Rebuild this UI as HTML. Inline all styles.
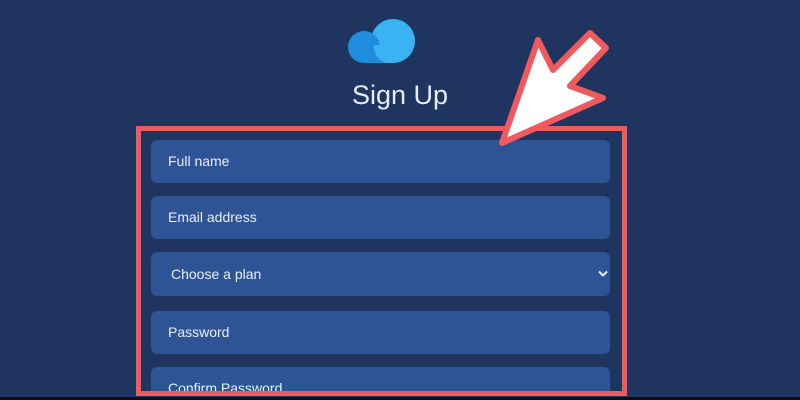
<!DOCTYPE html>
<html><head><style>
html,body{margin:0;padding:0;}
body{width:800px;height:400px;overflow:hidden;background:#1f355f;position:relative;font-family:"Liberation Sans",sans-serif;}
.wrap{position:absolute;left:0;top:0;width:800px;height:394px;overflow:hidden;}
.f{position:absolute;left:151px;width:459px;height:43px;background:#2e5496;border-radius:6px;color:#e8eefb;font-size:14px;line-height:43px;box-sizing:border-box;padding-left:17px;}
.title{position:absolute;left:0;width:800px;top:80px;text-align:center;color:#e6ecf7;font-size:27px;}
</style></head><body>
<svg width="800" height="400" style="position:absolute;left:0;top:0">
<circle cx="393" cy="41" r="22" fill="#3ab3f3"/>
<circle cx="364" cy="47" r="16" fill="#1e8ddd"/>
<rect x="364" y="45" width="30" height="18" fill="#3ab3f3"/>
<path d="M364 31 C376 33 372 48 376 55 C379 60 383 62 388 63 L364 63 Z" fill="#1e8ddd"/>
</svg>
<div class="title">Sign Up</div>
<div class="wrap">
<div class="f" style="top:140px">Full name</div>
<div class="f" style="top:196px">Email address</div>
<div class="f" style="top:252px;height:44px;line-height:44px;padding-left:20px">Choose a plan<svg width="10" height="8" style="position:absolute;right:2px;top:18px"><path d="M1 1.5 L5 5.5 L9 1.5" stroke="#e8eefb" stroke-width="2" fill="none"/></svg></div>
<div class="f" style="top:311px">Password</div>
<div class="f" style="top:367px">Confirm Password</div>
</div>
<div style="position:absolute;left:136px;top:126px;width:491px;height:270px;box-sizing:border-box;border:5px solid #ee5a5e;"></div>
<div style="position:absolute;left:0;top:397px;width:800px;height:3px;background:#0b0f18"></div>
<svg width="800" height="400" style="position:absolute;left:0;top:0">
<polygon points="502,143 538,40 553,70 590,33 606,48 570,86 603,98" fill="#fff" stroke="#ee5a5e" stroke-width="6" stroke-linejoin="round"/>
</svg>
</body></html>
